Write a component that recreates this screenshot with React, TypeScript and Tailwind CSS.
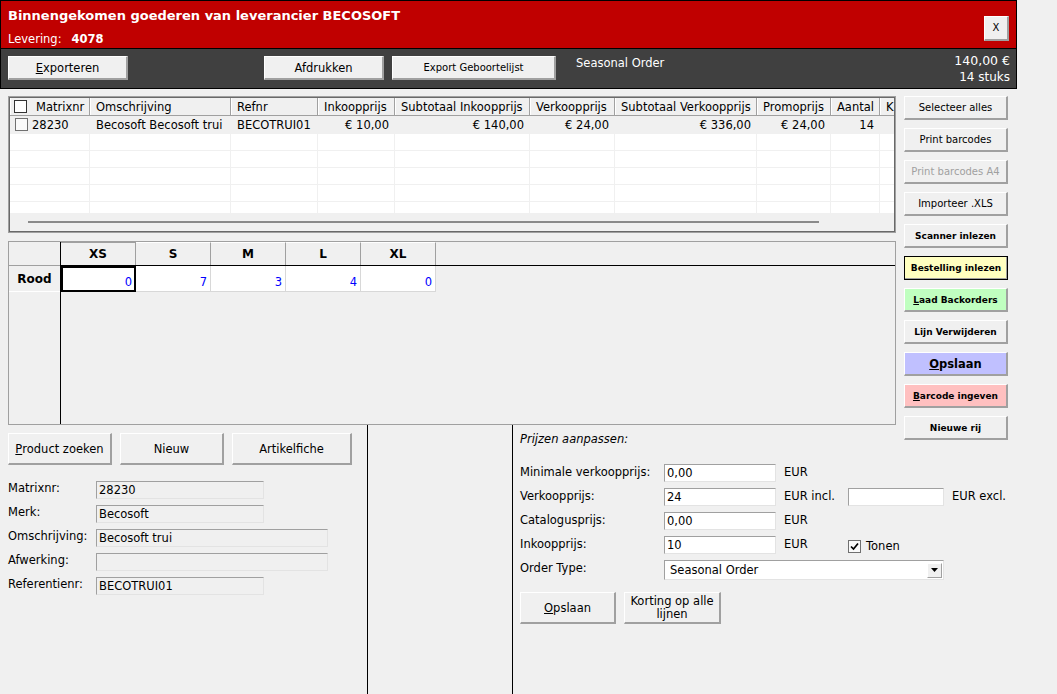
import React from 'react';

const btn =
  'flex items-center justify-center bg-[#f0f0f0] text-black border border-t-white border-l-white border-r-2 border-b-2 border-r-[#a0a0a0] border-b-[#a0a0a0]';
const sunken =
  'border border-t-[#a0a0a0] border-l-[#a0a0a0] border-b-[#e3e3e3] border-r-[#e3e3e3]';

const COLS = [
  { label: 'Matrixnr', cls: 'w-[80px]', value: '28230', right: false },
  { label: 'Omschrijving', cls: 'w-[141px]', value: 'Becosoft Becosoft trui', right: false },
  { label: 'Refnr', cls: 'w-[87px]', value: 'BECOTRUI01', right: false },
  { label: 'Inkoopprijs', cls: 'w-[77px]', value: '€ 10,00', right: true },
  { label: 'Subtotaal Inkoopprijs', cls: 'w-[135px]', value: '€ 140,00', right: true },
  { label: 'Verkoopprijs', cls: 'w-[85px]', value: '€ 24,00', right: true },
  { label: 'Subtotaal Verkoopprijs', cls: 'w-[142px]', value: '€ 336,00', right: true },
  { label: 'Promoprijs', cls: 'w-[74px]', value: '€ 24,00', right: true },
  { label: 'Aantal', cls: 'w-[49px]', value: '14', right: true },
  { label: 'K', cls: 'w-[40px]', value: '', right: true },
];

const SIZES = [
  { size: 'XS', qty: 0 },
  { size: 'S', qty: 7 },
  { size: 'M', qty: 3 },
  { size: 'L', qty: 4 },
  { size: 'XL', qty: 0 },
];

const FIELDS = [
  { label: 'Matrixnr:', value: '28230', wide: false },
  { label: 'Merk:', value: 'Becosoft', wide: false },
  { label: 'Omschrijving:', value: 'Becosoft trui', wide: true },
  { label: 'Afwerking:', value: '', wide: true },
  { label: 'Referentienr:', value: 'BECOTRUI01', wide: false },
];

function CheckBox({ checked = false, dark = false }: { checked?: boolean; dark?: boolean }) {
  return (
    <span
      className={
        dark
          ? 'inline-flex w-[13px] h-[13px] shrink-0 items-center justify-center bg-white border border-[#333333]'
          : 'inline-flex w-[13px] h-[13px] shrink-0 items-center justify-center bg-[#fafafa] border border-[#707070]'
      }
    >
      {checked && (
        <svg width="9" height="9" viewBox="0 0 9 9">
          <path d="M1 4.5 L3.5 7 L8 1.5" fill="none" stroke="#000" strokeWidth="1.7" />
        </svg>
      )}
    </span>
  );
}

function Header() {
  return (
    <div className="w-[1017px] border border-black">
      <div className="h-[48px] bg-[#c00000] border-b border-black flex justify-between">
        <div className="pl-[7px] pt-[7px] text-white">
          <div className="text-[13px] leading-[16px] font-bold">
            Binnengekomen goederen van leverancier BECOSOFT
          </div>
          <div className="mt-[8px] leading-[14px]">
            Levering:<span className="ml-[10px] font-bold">4078</span>
          </div>
        </div>
        <button className={`${btn} mt-[15px] mr-[7px] w-[25px] h-[25px] text-[10px]`}>X</button>
      </div>
      <div className="h-[39px] bg-[#404040] flex items-start pl-[7px]">
        <button className={`${btn} mt-[7px] w-[120px] h-[24px]`}>
          <span className="underline">E</span>xporteren
        </button>
        <button className={`${btn} mt-[7px] ml-[136px] w-[120px] h-[24px]`}>Afdrukken</button>
        <button className={`${btn} mt-[7px] ml-[8px] w-[164px] h-[24px] text-[10px]`}>
          Export Geboortelijst
        </button>
        <div className="mt-[7px] ml-[20px] text-white">Seasonal Order</div>
        <div className="ml-auto mr-[6px] mt-[3px] text-right text-white text-[12px] leading-[17px]">
          <div className="text-[12.5px]">140,00 €</div>
          <div>14 stuks</div>
        </div>
      </div>
    </div>
  );
}

function ProductTable() {
  return (
    <div className="h-[137px] border border-[#a0a0a0]">
      <div className="h-full border border-[#696969] flex flex-col overflow-hidden">
        {/* kolomkoppen */}
        <div className="h-[18px] flex bg-[#f0f0f0] border-b border-[#a0a0a0]">
          {COLS.map((c, i) => (
            <div
              key={c.label}
              className={`${c.cls} shrink-0 h-full flex items-center whitespace-nowrap overflow-hidden border-r border-[#a0a0a0] border-l border-l-white ${
                i === 0 ? 'pl-[3px]' : 'pl-[5px]'
              }`}
            >
              {i === 0 && <CheckBox dark />}
              <span className={i === 0 ? 'ml-[9px]' : ''}>{c.label}</span>
            </div>
          ))}
        </div>
        <div className="h-[97px] overflow-hidden bg-white">
          <div className="h-[17px] flex bg-[#f0f0f0]">
            {COLS.map((c, i) => (
              <div
                key={c.label}
                className={`${c.cls} shrink-0 h-full flex items-center whitespace-nowrap overflow-hidden ${
                  c.right ? 'justify-end pr-[6px]' : i === 0 ? 'pl-[5px]' : 'pl-[6px]'
                }`}
              >
                {i === 0 && <CheckBox />}
                <span className={i === 0 ? 'ml-[4px]' : ''}>{c.value}</span>
              </div>
            ))}
          </div>
          {[0, 1, 2, 3, 4, 5].map((r) => (
            <div key={r} className="h-[17px] flex border-t border-[#f0f0f0]">
              {COLS.map((c) => (
                <div key={c.label} className={`${c.cls} shrink-0 h-full border-r border-[#f0f0f0]`} />
              ))}
            </div>
          ))}
        </div>
        {/* horizontale scrollbalk */}
        <div className="h-[18px] flex items-center bg-[#f0f0f0]">
          <div className="ml-[18px] w-[791px] h-[2px] bg-[#8a8a8a]" />
        </div>
      </div>
    </div>
  );
}

function SizeMatrix() {
  return (
    <div className="mt-[8px] h-[184px] border border-[#a0a0a0] flex">
      <div className="w-[52px] border-r border-black flex flex-col">
        <div className="h-[24px] bg-[#f0f0f0] border-b border-[#a0a0a0]" />
        <div className="h-[26px] flex items-center justify-center font-bold text-[12px] border-b border-white">
          Rood
        </div>
      </div>
      <div className="flex-1 flex flex-col">
        <div className="h-[24px] border-b border-black flex">
          {SIZES.map((s, i) => (
            <div
              key={s.size}
              className={`w-[75px] h-full flex items-center justify-center font-bold text-[12px] border-r border-[#a0a0a0] ${
                i === 0 ? 'border-t border-t-[#a0a0a0]' : 'border-t border-t-white'
              }`}
            >
              {s.size}
            </div>
          ))}
        </div>
        <div className="h-[26px] flex">
          {SIZES.map((s, i) => (
            <div
              key={s.size}
              className={`w-[75px] h-full flex items-end justify-end bg-white text-[#0000ff] leading-[13px] ${
                i === 0 ? 'border-2 border-black pr-[2px] pb-[1px]' : 'border-r border-b border-[#d8d8d8] pr-[3px] pb-[2px]'
              }`}
            >
              {s.qty}
            </div>
          ))}
        </div>
      </div>
    </div>
  );
}

function SideButtons() {
  return (
    <div className="ml-[8px] w-[104px] mb-[-15px] flex flex-col gap-[8px]">
      <button className={`${btn} h-[24px] text-[10px]`}>Selecteer alles</button>
      <button className={`${btn} h-[24px] text-[10px]`}>Print barcodes</button>
      <button className={`${btn} h-[24px] text-[10px] !text-[#a0a0a0]`}>Print barcodes A4</button>
      <button className={`${btn} h-[24px] text-[10px]`}>Importeer .XLS</button>
      <button className={`${btn} h-[24px] text-[9px] font-bold`}>Scanner inlezen</button>
      <button className="h-[24px] flex items-center justify-center text-[9px] font-bold bg-[#ffffc0] border border-black shadow-[inset_-1px_-1px_0_#a0a0a0]">
        Bestelling inlezen
      </button>
      <button className={`${btn} h-[24px] text-[9px] font-bold !bg-[#c0ffc0]`}>
        <span className="underline">L</span>aad Backorders
      </button>
      <button className={`${btn} h-[24px] text-[9px] font-bold`}>Lijn Verwijderen</button>
      <button className={`${btn} h-[24px] text-[11.5px] font-bold !bg-[#c0c0ff]`}>
        <span className="underline">O</span>pslaan
      </button>
      <button className={`${btn} h-[24px] text-[9px] font-bold !bg-[#ffc0c0]`}>
        <span className="underline">B</span>arcode ingeven
      </button>
      <button className={`${btn} h-[24px] text-[9px] font-bold`}>Nieuwe rij</button>
    </div>
  );
}

function PriceRow({ label, children }: { label: string; children: React.ReactNode }) {
  return (
    <div className="flex items-start h-[18px]">
      <div className="w-[144px] pt-[1px]">{label}</div>
      {children}
    </div>
  );
}

function PriceInput({ value, cls }: { value: string; cls: string }) {
  return <div className={`${cls} h-[18px] bg-white pl-[2px] flex items-center ${sunken}`}>{value}</div>;
}

function BottomPanels() {
  return (
    <div className="flex h-[269px]">
      <div className="w-[368px] border-r border-black pl-[8px] pt-[8px]">
        <div className="flex gap-[8px]">
          <button className={`${btn} w-[104px] h-[32px]`}>
            <span className="underline">P</span>roduct zoeken
          </button>
          <button className={`${btn} w-[104px] h-[32px]`}>Nieuw</button>
          <button className={`${btn} w-[120px] h-[32px]`}>Artikelfiche</button>
        </div>
        <div className="mt-[16px] flex flex-col gap-[6px]">
          {FIELDS.map((f) => (
            <div key={f.label} className="flex h-[18px]">
              <div className="w-[88px]">{f.label}</div>
              <div
                className={`${f.wide ? 'w-[232px]' : 'w-[168px]'} h-[18px] pl-[2px] flex items-center bg-[#f0f0f0] ${sunken}`}
              >
                {f.value}
              </div>
            </div>
          ))}
        </div>
      </div>
      <div className="w-[145px] border-r border-black" />
      <div className="flex-1 pl-[7px] pt-[7px]">
        <div className="italic">Prijzen aanpassen:</div>
        <div className="mt-[18px] flex flex-col gap-[6px]">
          <PriceRow label="Minimale verkoopprijs:">
            <PriceInput value="0,00" cls="w-[112px]" />
            <div className="ml-[8px] pt-[1px]">EUR</div>
          </PriceRow>
          <PriceRow label="Verkoopprijs:">
            <PriceInput value="24" cls="w-[112px]" />
            <div className="ml-[8px] w-[64px] pt-[1px]">EUR incl.</div>
            <PriceInput value="" cls="w-[96px]" />
            <div className="ml-[8px] pt-[1px]">EUR excl.</div>
          </PriceRow>
          <PriceRow label="Catalogusprijs:">
            <PriceInput value="0,00" cls="w-[112px]" />
            <div className="ml-[8px] pt-[1px]">EUR</div>
          </PriceRow>
          <PriceRow label="Inkoopprijs:">
            <PriceInput value="10" cls="w-[112px]" />
            <div className="ml-[8px] w-[64px] pt-[1px]">EUR</div>
            <div className="mt-[3px] flex items-center">
              <CheckBox checked />
              <span className="ml-[5px]">Tonen</span>
            </div>
          </PriceRow>
          <div className="flex items-start h-[20px]">
            <div className="w-[144px] pt-[1px]">Order Type:</div>
            <div className={`w-[280px] h-[20px] bg-white flex items-center justify-between pl-[5px] pr-[1px] ${sunken}`}>
              <span>Seasonal Order</span>
              <span className="w-[15px] h-[15px] flex items-center justify-center bg-[#f0f0f0] border border-t-white border-l-white border-r-[#a0a0a0] border-b-[#a0a0a0]">
                <svg width="7" height="4" viewBox="0 0 7 4">
                  <polygon points="0,0 7,0 3.5,4" fill="#000" />
                </svg>
              </span>
            </div>
          </div>
        </div>
        <div className="mt-[12px] flex gap-[8px]">
          <button className={`${btn} w-[96px] h-[32px]`}>
            <span className="underline">O</span>pslaan
          </button>
          <button className={`${btn} w-[97px] h-[32px] leading-[13px] text-center`}>
            Korting op alle
            <br />
            lijnen
          </button>
        </div>
      </div>
    </div>
  );
}

export default function App() {
  return (
    <div className="h-[694px] w-full overflow-hidden bg-[#f0f0f0] text-[11.5px] leading-[14px] text-black font-['DejaVu_Sans',sans-serif]">
      <Header />
      <div className="mt-[7px] flex items-start">
        <div className="ml-[8px] w-[888px] flex flex-col">
          <ProductTable />
          <SizeMatrix />
        </div>
        <SideButtons />
      </div>
      <BottomPanels />
    </div>
  );
}
